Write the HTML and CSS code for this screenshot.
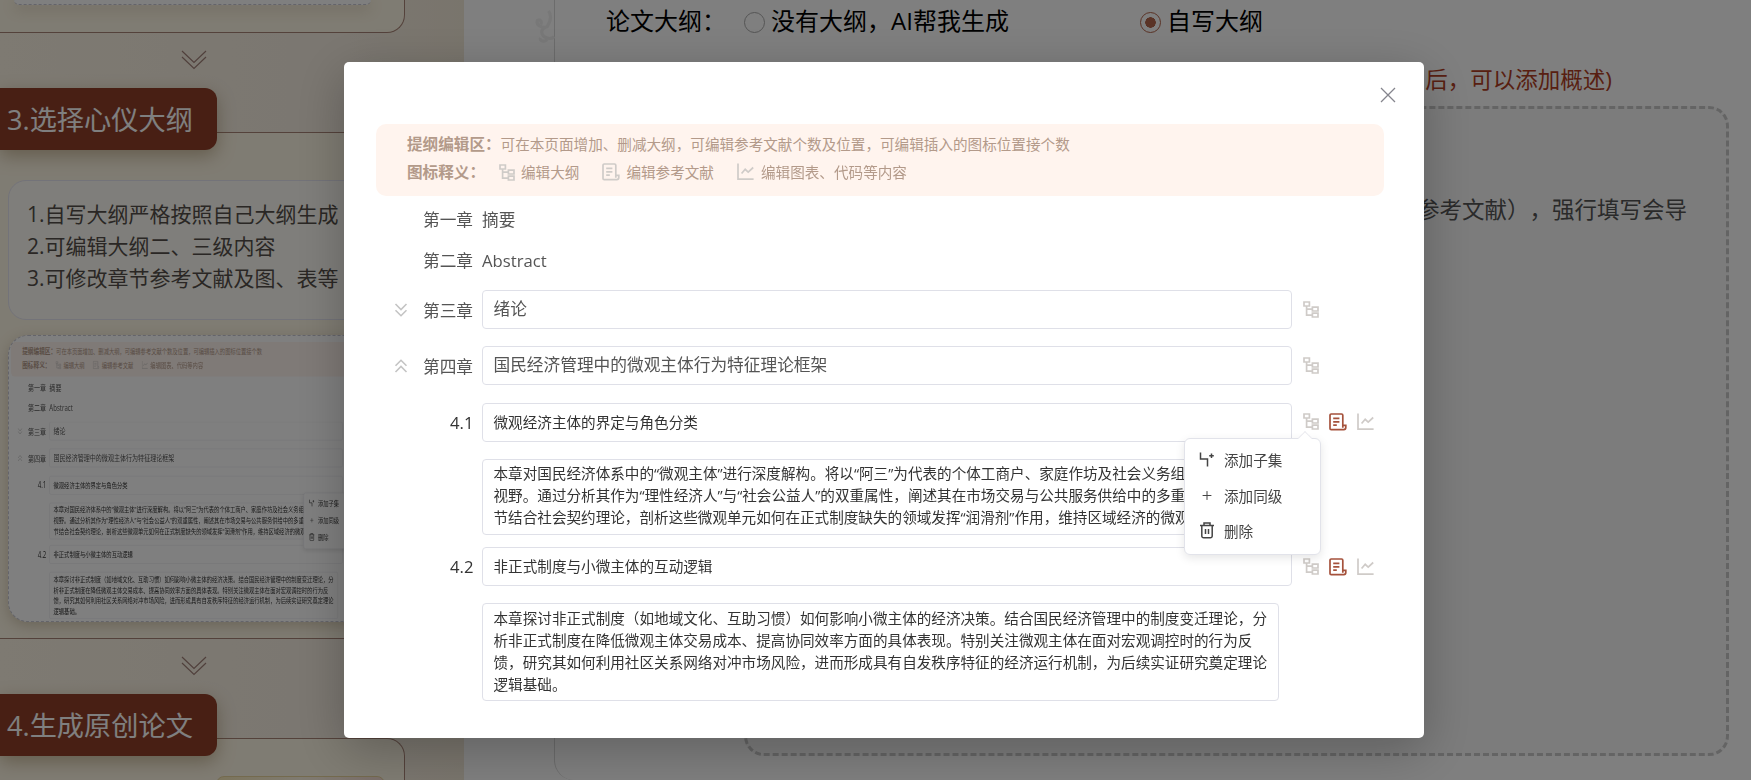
FILE: index.html
```
<!DOCTYPE html>
<html lang="zh-CN">

<head>
    <meta charset="utf-8">
    <title>论文大纲</title>
    <link rel="stylesheet" href="styles.css">
</head>

<body>
    <!-- icon sprite -->
    <svg class="sprite" width="0" height="0">
        <symbol id="i-tree" viewBox="0 0 16 17">
            <path d="M1 1h5.4v4H1zM9.4 6.2h5.600v3.800H9.4zM9.4 12.200h5.600v3.800H9.4zM3.600 5v9.200h5.800M3.600 8.200h5.800" />
        </symbol>
        <symbol id="i-doc" viewBox="0 0 18 18">
            <path d="M13.800 11.800V2.200A1.200 1.200 0 0 0 12.600 1H2.200A1.200 1.200 0 0 0 1 2.200v13.200a1.200 1.200 0 0 0 1.200 1.200h12.600a2 2 0 0 0 2-2v-2.300h-3v2.500M4.200 5.400h6.200M4.200 8.800h6.200M4.200 12.200h3.600" />
        </symbol>
        <symbol id="i-chart" viewBox="0 0 18 17">
            <path d="M1 0v15.600h15.600M4.600 10l3.600-4.200 3 2.800L16.200 4" />
        </symbol>
        <symbol id="i-chevrons" viewBox="0 0 26 20">
            <path d="M1 1l12 11.500L25 1M1 7l12 11.500L25 7" />
        </symbol>
        <symbol id="i-fold" viewBox="0 0 14 14">
            <path d="M1.500 1L7 6.500 12.500 1M1.500 7.200L7 12.700l5.500-5.500" />
        </symbol>
        <symbol id="i-child" viewBox="0 0 16 16">
            <path d="M1.500 1v6.500h7V15M12.500 2v4.600M10.200 4.300h4.600" />
        </symbol>
        <symbol id="i-plus" viewBox="0 0 16 16">
            <path d="M8 3.600v8.800M3.600 8h8.800" />
        </symbol>
        <symbol id="i-trash" viewBox="0 0 16 17">
            <path d="M1 3.600h14M5 3.400V1h6v2.400M2.800 3.600v10.400a1.800 1.800 0 0 0 1.800 1.800h6.800a1.800 1.800 0 0 0 1.800-1.800V3.600M6.500 7v5M9.500 7v5" />
        </symbol>
    </svg>

    <div class="page">
        <aside class="guide">
            <section class="step-box step-box-first">
                <div class="shot-end"></div>
            </section>
            <svg class="down"><use href="#i-chevrons" /></svg>
            <section class="step">
                <h2 class="badge">3.选择心仪大纲</h2>
                <div class="step-box step-box-outline">
                    <div class="tips">
                        <p>1.自写大纲严格按照自己大纲生成</p>
                        <p>2.可编辑大纲二、三级内容</p>
                        <p>3.可修改章节参考文献及图、表等</p>
                    </div>
                    <div class="shot">
                        <div class="shot-inner" id="preview"></div>
                    </div>
                </div>
            </section>
            <svg class="down"><use href="#i-chevrons" /></svg>
            <section class="step">
                <h2 class="badge">4.生成原创论文</h2>
                <div class="step-box step-box-last">
                    <div class="mini-card"></div>
                </div>
            </section>
        </aside>

        <main class="work">
            <svg class="cloud" viewBox="0 0 30 50">
                <path d="M22 6c4 6 2 14-2 20-6 2-14-2-12-8 4-2 6 2 4 5M20 26c-8 2-8 8-4 12 4 3 10 4 13 0M12 40c-2 4 6 5 8 2" />
            </svg>
            <div class="form">
                <div class="choice">
                    <span class="choice-label">论文大纲：</span>
                    <span class="radio"></span>
                    <span class="choice-a">没有大纲，AI帮我生成</span>
                    <span class="radio radio-on"></span>
                    <span>自写大纲</span>
                </div>
                <p class="hint">(填写大纲后，可以添加概述)</p>
                <div class="drop">
                    <p>（不要填写摘要、参考文献），强行填写会导</p>
                </div>
            </div>
        </main>
    </div>

    <div class="overlay">
        <div class="dialog">
            <button class="close" aria-label="关闭">
                <svg viewBox="0 0 16 16"><path d="M1 1l14 14M15 1L1 15" /></svg>
            </button>
            <div class="editor" id="editor">
                <div class="notice">
                    <p><b>提纲编辑区：</b>可在本页面增加、删减大纲，可编辑参考文献个数及位置，可编辑插入的图标位置接个数</p>
                    <p class="legend">
                        <b>图标释义：</b>
                        <svg class="tree"><use href="#i-tree" /></svg><span>编辑大纲</span>
                        <svg class="doc"><use href="#i-doc" /></svg><span>编辑参考文献</span>
                        <svg class="chart"><use href="#i-chart" /></svg><span>编辑图表、代码等内容</span>
                    </p>
                </div>

                <div class="row row-text"><span class="no">第一章</span><span>摘要</span></div>
                <div class="row row-text row-second"><span class="no">第二章</span><span>Abstract</span></div>
                <div class="row">
                    <svg class="fold"><use href="#i-fold" /></svg>
                    <span class="no">第三章</span>
                    <div class="field">绪论</div>
                    <div class="tools"><svg class="tree"><use href="#i-tree" /></svg></div>
                </div>
                <div class="row">
                    <svg class="fold fold-up"><use href="#i-fold" /></svg>
                    <span class="no">第四章</span>
                    <div class="field">国民经济管理中的微观主体行为特征理论框架</div>
                    <div class="tools"><svg class="tree"><use href="#i-tree" /></svg></div>
                </div>
                <div class="row row-sub">
                    <span class="no">4.1</span>
                    <div class="field">微观经济主体的界定与角色分类</div>
                    <div class="tools">
                        <svg class="tree"><use href="#i-tree" /></svg>
                        <svg class="doc active"><use href="#i-doc" /></svg>
                        <svg class="chart"><use href="#i-chart" /></svg>
                        <div class="menu">
                            <div class="menu-item"><svg><use href="#i-child" /></svg>添加子集</div>
                            <div class="menu-item plus"><svg><use href="#i-plus" /></svg>添加同级</div>
                            <div class="menu-item"><svg><use href="#i-trash" /></svg>删除</div>
                        </div>
                    </div>
                </div>
                <div class="area">本章对国民经济体系中的“微观主体”进行深度解构。将以“阿三”为代表的个体工商户、家庭作坊及社会义务组<br>视野。通过分析其作为“理性经济人”与“社会公益人”的双重属性，阐述其在市场交易与公共服务供给中的多重<br>节结合社会契约理论，剖析这些微观单元如何在正式制度缺失的领域发挥“润滑剂”作用，维持区域经济的微观</div>
                <div class="row row-sub">
                    <span class="no">4.2</span>
                    <div class="field">非正式制度与小微主体的互动逻辑</div>
                    <div class="tools">
                        <svg class="tree"><use href="#i-tree" /></svg>
                        <svg class="doc active"><use href="#i-doc" /></svg>
                        <svg class="chart"><use href="#i-chart" /></svg>
                    </div>
                </div>
                <div class="area area-last">本章探讨非正式制度（如地域文化、互助习惯）如何影响小微主体的经济决策。结合国民经济管理中的制度变迁理论，分<br>析非正式制度在降低微观主体交易成本、提高协同效率方面的具体表现。特别关注微观主体在面对宏观调控时的行为反<br>馈，研究其如何利用社区关系网络对冲市场风险，进而形成具有自发秩序特征的经济运行机制，为后续实证研究奠定理论<br>逻辑基础。</div>
            </div>
        </div>
    </div>
    <script type="text/javascript">
    //the guide on the left shows a small copy of the editor
    var copy = document.getElementById("editor").cloneNode(true);
    copy.removeAttribute("id");
    document.getElementById("preview").appendChild(copy);
    </script>
</body>

</html>
```
FILE: styles.css
```
* {
    box-sizing: border-box;
}

body {
    margin: 0;
    height: 780px;
    overflow: hidden;
    font-family: "Open Sans", "Noto Sans CJK SC", sans-serif;
    color: #333;
}

p,
h2 {
    margin: 0;
}

svg {
    fill: none;
    stroke: currentColor;
    flex: none;
}

.sprite {
    position: absolute;
}

.page {
    display: flex;
    height: 780px;
    overflow: hidden;
}

/* left guide */
.guide {
    width: 464px;
    flex: none;
    height: 780px;
    overflow: hidden;
    background: linear-gradient(90deg, #fcf4e4, #f6eee2 75%, #f3ead9);
}

.step-box {
    width: 405px;
    border: 1px solid #a98577;
    border-left: 0;
    background: #fff8e6;
}

.step-box-first {
    height: 33px;
    border-top: 0;
    border-radius: 0 0 18px 0;
}

.shot-end {
    width: 357px;
    height: 5px;
    margin-left: 14px;
    background: #fff;
    border-bottom: 1px dashed #c8c8d4;
    border-radius: 0 0 14px 14px;
    box-shadow: 0 4px 14px rgba(120, 100, 60, .3);
}

.down {
    display: block;
    width: 26px;
    height: 20px;
    margin: 17px 0 18px 181px;
    color: #a08078;
    stroke-width: 1.2;
}

.step {
    position: relative;
}

.badge {
    position: relative;
    z-index: 1;
    width: 217px;
    height: 62px;
    padding-left: 7px;
    margin-bottom: -18px;
    border-radius: 0 12px 12px 0;
    background: #903e28;
    box-shadow: 0 6px 18px rgba(120, 90, 40, .4);
    color: #fff;
    font-size: 27.200px;
    font-weight: 400;
    line-height: 63px;
}

.step-box-outline {
    height: 507px;
    padding: 47px 0 0 8px;
    border-radius: 0 18px 18px 0;
}

.tips {
    width: 370px;
    height: 140px;
    padding: 17px 0 0 18px;
    border: 1px solid #e6e6f2;
    border-radius: 18px;
    background: #fffdf6;
    font-size: 21px;
    line-height: 32px;
    white-space: nowrap;
    color: #554f4a;
}

.shot {
    width: 370px;
    height: 287px;
    margin-top: 15px;
    padding: 6px 0 0 2px;
    overflow: hidden;
    border: 1px dashed #c8c8d4;
    border-radius: 20px;
    background: #fff;
    box-shadow: 0 4px 14px rgba(120, 100, 60, .3);
}

.shot-inner {
    width: 1008px;
    transform: scale(.362, .48);
    transform-origin: 0 0;
}

.step + .down {
    margin-top: 17px;
}

.step-box-last {
    height: 120px;
    padding: 37px 0 0 216px;
    border-radius: 0 18px 0 0;
}

.mini-card {
    width: 169px;
    height: 60px;
    border: 1px solid #e8d49c;
    border-radius: 8px;
    background: linear-gradient(90deg, #f8e9b8, #fff6e2 50%, #f8e0d6);
}

/* right form */
.work {
    position: relative;
    flex: 1;
    padding-left: 90px;
    background: #fefefe;
}

.cloud {
    position: absolute;
    top: 3px;
    left: 67px;
    width: 24px;
    height: 46px;
    color: #f1f1f1;
    stroke-width: 4;
}

.form {
    height: 780px;
    padding-left: 51px;
    border-left: 1px solid #d8d8d8;
    border-radius: 0 0 0 20px;
    background: #fff;
}

.choice {
    display: flex;
    align-items: center;
    height: 44px;
    font-size: 24px;
    line-height: 32px;
    color: #000;
    white-space: nowrap;
}

.choice span:not(.radio) {
    margin-top: -2px;
}

.choice-label {
    width: 138px;
}

.radio {
    width: 21px;
    height: 21px;
    margin-right: 6px;
    border: 1px solid #aaa;
    border-radius: 50%;
    background: #fff;
}

.choice-a {
    width: 369px;
}

.radio-on {
    border-color: #b5664c;
    background: radial-gradient(#b5664c 0 5px, #fff 5.500px);
}

.hint {
    width: 1006px;
    margin-top: 20px;
    font-size: 22.500px;
    line-height: 32px;
    text-align: right;
    color: #b13f25;
}

.drop {
    width: 985px;
    height: 650px;
    margin: 10px 0 0 138px;
    padding: 85px 39px 0 0;
    border: 3px dashed #c9c9c9;
    border-radius: 20px;
    background: #f9f9f9;
    font-size: 22.500px;
    line-height: 32px;
    text-align: right;
    text-spacing-trim: space-all;
    color: #555;
}

/* dialog */
.overlay {
    position: fixed;
    z-index: 10;
    inset: 0;
    padding-top: 62px;
    background: rgba(0, 0, 0, .5);
}

.dialog {
    position: relative;
    width: 1080px;
    height: 676px;
    margin-left: 344px;
    padding: 62px 40px 0 32px;
    border-radius: 5px;
    background: #fff;
    box-shadow: 0 12px 50px rgba(0, 0, 0, .25);
}

.close {
    position: absolute;
    top: 25px;
    right: 28px;
    width: 16px;
    height: 16px;
    padding: 0;
    border: 0;
    background: none;
    color: #85858d;
    stroke-width: 1.300;
}

.close svg {
    display: block;
    width: 16px;
    height: 16px;
}

.editor {
    position: relative;
    width: 1008px;
    color: #555;
}

.notice {
    height: 72px;
    padding: 6px 0 0 31px;
    border-radius: 10px;
    background: #fff4ee;
    color: #b39a8a;
    font-size: 14.600px;
    line-height: 28px;
    white-space: nowrap;
}

.notice b {
    font-size: 15.600px;
}

.legend {
    display: flex;
    align-items: center;
}

.legend svg {
    margin-right: 6px;
}

.legend b {
    width: 92px;
}

.legend span {
    margin-right: 23px;
}

.tree,
.doc,
.chart {
    width: 16px;
    height: 17px;
    color: #cfcbc8;
    stroke-width: 1.700;
}

.doc,
.chart {
    width: 18px;
    height: 18px;
}

.active {
    color: #a5523c;
}

.row {
    display: flex;
    align-items: center;
    height: 39px;
    margin-top: 17.400px;
    padding-left: 18px;
    font-size: 16.700px;
}

.row-text {
    height: 24px;
    margin-top: 11px;
    padding-left: 47px;
}

.row-text .no {
    width: 59px;
}

.row-text.row-second {
    margin-top: 17px;
    margin-bottom: 18px;
}

.fold {
    width: 14px;
    height: 14px;
    margin-right: 15px;
    color: #c4c4c4;
    stroke-width: 1.600;
}

.fold-up {
    transform: rotate(180deg);
}

.no {
    width: 59px;
    white-space: nowrap;
}

.row-sub {
    padding-left: 0;
    font-size: 14.600px;
    color: #333;
}

.row-sub .no {
    width: 106px;
    padding-left: 74px;
    font-size: 16.700px;
}

.field {
    width: 809.500px;
    height: 39px;
    padding-left: 10.500px;
    border: 1px solid #dfe0e8;
    border-radius: 4px;
    line-height: 36px;
}

.tools {
    position: relative;
    display: flex;
    gap: 10px;
    margin-left: 11.500px;
}

.menu {
    position: absolute;
    z-index: 2;
    top: 25px;
    left: -119px;
    width: 137px;
    height: 117px;
    padding: 3px 0 0 14px;
    border: 1px solid #e2e3ea;
    border-radius: 6px;
    background: #fff;
    box-shadow: 0 3px 10px rgba(0, 0, 0, .1);
}

.menu::before {
    content: "";
    position: absolute;
    top: -6px;
    left: 115px;
    width: 9px;
    height: 9px;
    border: 1px solid #ebebf0;
    border-right: 0;
    border-bottom: 0;
    background: #fff;
    transform: rotate(45deg);
}

.menu-item {
    display: flex;
    align-items: center;
    height: 35.400px;
    color: #444;
}

.menu-item svg {
    width: 16px;
    height: 17px;
    margin-right: 9px;
    stroke-width: 1.500;
}

.plus svg {
    stroke-width: 1;
}

.area {
    width: 797px;
    height: 76px;
    margin: 17px 0 0 106px;
    padding: 3.500px 0 0 10.500px;
    border: 1px solid #dfe0e8;
    border-radius: 4px;
    color: #333;
    font-size: 14.600px;
    line-height: 21.900px;
    white-space: nowrap;
}

.area + .row {
    margin-top: 12.500px;
}

.area-last {
    height: 97.500px;
}
```
